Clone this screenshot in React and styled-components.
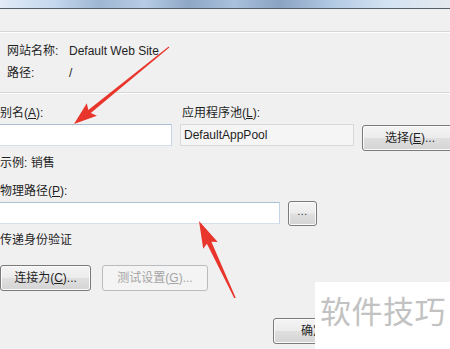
import React from 'react'
import styled, { createGlobalStyle, css } from 'styled-components'

const GlobalStyle = createGlobalStyle`
  html, body {
    margin: 0;
    padding: 0;
  }
  body {
    width: 450px;
    height: 349px;
    overflow: hidden;
    background: #f0f0f0;
    font-family: "Liberation Sans", "Noto Sans CJK SC", sans-serif;
    font-size: 12px;
    color: #1f1f1f;
  }
`

const Page = styled.div`
  position: relative;
  width: 450px;
  height: 349px;
  overflow: hidden;
`

const TitleBar = styled.div`
  height: 8px;
  border-bottom: 1px solid #56606c;
  background: linear-gradient(
    to right,
    #e2ebf6 0%,
    #c4d8ee 12%,
    #9fb6d2 22%,
    #b7cde6 32%,
    #8ea7c5 42%,
    #a9c1dd 52%,
    #8aa3c2 62%,
    #b3cae4 74%,
    #d3e2f2 86%,
    #e4e9ef 100%
  );
`

const TopStrip = styled.div`
  height: 22px;
  border-bottom: 1px solid #d6d6d6;
  box-shadow: 0 1px 0 #ffffff;
`

const InfoSection = styled.div`
  margin-top: 1px;
  padding: 7px 0 8px 7px;
  border-bottom: 1px solid #d6d6d6;
  box-shadow: 0 1px 0 #ffffff;
`

const InfoRow = styled.div`
  display: grid;
  grid-template-columns: 62px 1fr;
  line-height: 22px;
`

const Form = styled.div`
  margin-top: 1px;
  padding-top: 11px;
`

const TopGrid = styled.div`
  display: grid;
  grid-template-columns: 172px 174px 96px;
  grid-template-rows: 16px 22px;
  column-gap: 8px;
  row-gap: 3px;
`

const Label = styled.div`
  line-height: 16px;
  white-space: nowrap;
  margin-top: ${p => p.$top || 0}px;
  padding-left: ${p => p.$indent || 0}px;
`

const TextBox = styled.input`
  box-sizing: border-box;
  height: 22px;
  width: ${p => p.$width}px;
  margin: 0;
  padding: 0 3px;
  font: inherit;
  color: #1f1f1f;
  outline: none;
  border: 1px solid;
  ${p => p.$readOnly
    ? css`
        background: #f5f5f5;
        border-color: #d9d9d9;
      `
    : css`
        background: #ffffff;
        border-color: #abc0d6 #c5d5e6 #d3dfeb #c5d5e6;
        border-left: none;
      `}
`

const Button = styled.button`
  box-sizing: border-box;
  height: ${p => p.$height || 26}px;
  width: ${p => p.$width}px;
  margin: 0;
  padding: 0;
  font: inherit;
  line-height: 1;
  border-radius: 3px;
  white-space: nowrap;
  align-self: ${p => p.$self || 'auto'};
  margin-top: ${p => p.$top || 0}px;
  margin-left: ${p => p.$left || 0}px;
  ${p => p.disabled
    ? css`
        color: #a4a4a4;
        border: 1px solid #b9bcbe;
        background: #f4f4f4;
      `
    : css`
        color: #1f1f1f;
        border: 1px solid #7a7a7a;
        background: linear-gradient(#f4f4f4 0%, #ececec 48%, #dfdfdf 52%, #d4d4d4 100%);
        box-shadow: inset 0 0 0 1px #fbfbfb;
      `}
`

const PathRow = styled.div`
  display: flex;
  align-items: center;
  gap: 8px;
  height: 22px;
  margin-top: 3px;
`

const ButtonRow = styled.div`
  display: flex;
  gap: 11px;
  margin-top: 17px;
`

const Dots = styled.span`
  font-size: 10px;
  letter-spacing: 0.5px;
  position: relative;
  top: -2px;
`

const Overlay = styled.svg`
  position: absolute;
  left: 0;
  top: 0;
  pointer-events: none;
`

const Watermark = styled.div`
  position: absolute;
  left: 315px;
  top: 282px;
  width: 135px;
  height: 67px;
  background: #ffffff;
  box-sizing: border-box;
  padding-left: 5px;
  font-family: "Noto Sans CJK SC", sans-serif;
  font-size: 31px;
  letter-spacing: 0.5px;
  line-height: 56px;
  color: #c2c2c2;
  white-space: nowrap;
`

const arrowPoints = (tx, ty, hx, hy, headLen, headHalf, w0, w1) => {
  const dx = hx - tx
  const dy = hy - ty
  const len = Math.hypot(dx, dy)
  const ux = dx / len
  const uy = dy / len
  const nx = -uy
  const ny = ux
  const bx = hx - ux * headLen
  const by = hy - uy * headLen
  const p = (x, y) => `${x.toFixed(1)},${y.toFixed(1)}`
  return [
    p(tx + nx * w0 / 2, ty + ny * w0 / 2),
    p(bx + nx * w1 / 2, by + ny * w1 / 2),
    p(bx - ux * 3 + nx * headHalf, by - uy * 3 + ny * headHalf),
    p(hx, hy),
    p(bx - ux * 3 - nx * headHalf, by - uy * 3 - ny * headHalf),
    p(bx - nx * w1 / 2, by - ny * w1 / 2),
    p(tx - nx * w0 / 2, ty - ny * w0 / 2),
  ].join(' ')
}

const Arrows = () => (
  <Overlay width="450" height="349" viewBox="0 0 450 349">
    <polygon points={arrowPoints(169, 47, 74, 124, 20, 8, 1, 4)} fill="#e8362c" />
    <polygon points={arrowPoints(235, 298, 199, 221, 24, 8, 1.5, 5)} fill="#e8362c" />
  </Overlay>
)

export default function App() {
  return (
    <Page>
      <GlobalStyle />
      <TitleBar />
      <TopStrip />
      <InfoSection>
        <InfoRow>
          <span>网站名称:</span>
          <span>Default Web Site</span>
        </InfoRow>
        <InfoRow>
          <span>路径:</span>
          <span>/</span>
        </InfoRow>
      </InfoSection>
      <Form>
        <TopGrid>
          <Label>别名(<u>A</u>):</Label>
          <Label $indent={2}>应用程序池(<u>L</u>):</Label>
          <span />
          <TextBox $width={172} defaultValue="" />
          <TextBox $width={174} $readOnly readOnly defaultValue="DefaultAppPool" />
          <Button $width={96} $self="start" $top={1}>选择(<u>E</u>)...</Button>
        </TopGrid>
        <Label $top={9}>示例: 销售</Label>
        <Label $top={12}>物理路径(<u>P</u>):</Label>
        <PathRow>
          <TextBox $width={280} defaultValue="" />
          <Button $width={29} $height={25}><Dots>...</Dots></Button>
        </PathRow>
        <Label $top={8}>传递身份验证</Label>
        <ButtonRow>
          <Button $width={91}>连接为(<u>C</u>)...</Button>
          <Button $width={106} disabled>测试设置(<u>G</u>)...</Button>
        </ButtonRow>
        <Button $width={80} $top={27} $left={273}>确定</Button>
      </Form>
      <Arrows />
      <Watermark>软件技巧</Watermark>
    </Page>
  )
}
